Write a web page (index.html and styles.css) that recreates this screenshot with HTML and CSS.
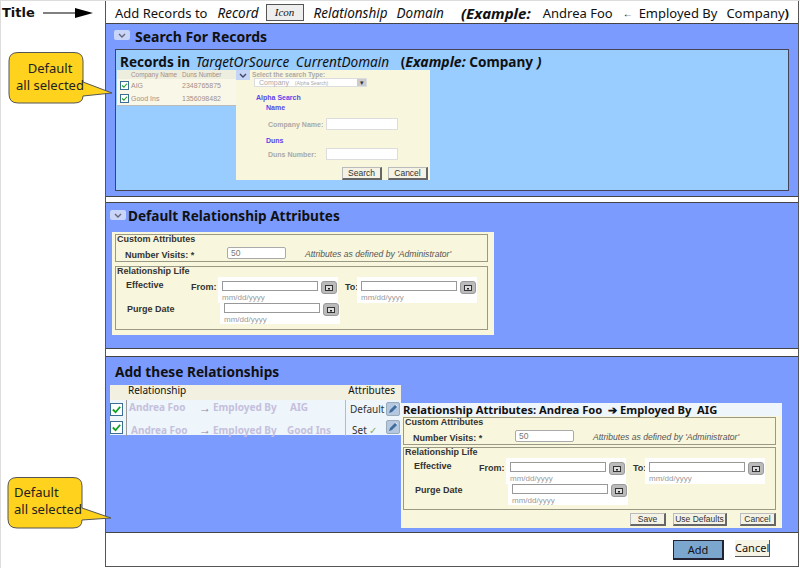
FILE: index.html
```html
<!DOCTYPE html>
<html lang="en">
<head>
  <meta charset="UTF-8" />
  <title>Add Records</title>
  <link rel="stylesheet" href="styles.css">
</head>
<body>
  <div class="page">
    <aside class="gutter">
      <div class="title-note">
        <b>Title</b>
        <svg class="title-arrow" width="50" height="10" viewBox="0 0 50 10"><path d="M0 5H35" stroke="#000" stroke-width="1"/><path d="M32 0L50 5L32 10Z" fill="#000"/></svg>
      </div>
    </aside>

    <main class="main">
      <header class="titlebar">
        <span class="t1">Add Records to</span>
        <i class="t2">Record</i>
        <span class="icon-box">Icon</span>
        <i class="t3">Relationship</i>
        <i class="t4">Domain</i>
        <b class="t5"><i>(Example:</i></b>
        <span class="t6">Andrea Foo</span>
        <b class="t7">←</b>
        <span class="t8">Employed By</span>
        <span class="t9">Company<b>)</b></span>
      </header>

      <section class="sec sec-search">
        <h2 class="sec-head"><span class="toggle"><svg width="8" height="5" viewBox="0 0 8 5"><path d="M1 1L4 4L7 1" fill="none" stroke="#667" stroke-width="1.4"/></svg></span>Search For Records</h2>
        <div class="records">
          <h3 class="records-head">Records in <i class="light first-light">TargetOrSource</i> <i class="light">CurrentDomain</i> <span class="ex">(<i>Example:</i> Company<i> )</i></span></h3>
          <div class="records-body">
            <div class="mini-table">
              <div class="mini-row mini-top"><span></span><span>Company Name</span><span>Duns Number</span></div>
              <div class="mini-row"><span class="chk small"><svg viewBox="0 0 12 12"><path d="M2 6L5 9L10 3" fill="none" stroke="#12a020" stroke-width="2"/></svg></span><span>AIG</span><span>2348765875</span></div>
              <div class="mini-row"><span class="chk small"><svg viewBox="0 0 12 12"><path d="M2 6L5 9L10 3" fill="none" stroke="#12a020" stroke-width="2"/></svg></span><span>Good Ins</span><span>1356098482</span></div>
            </div>
            <form class="search-form">
              <span class="form-toggle"><svg width="8" height="5" viewBox="0 0 8 5"><path d="M1 1L4 4L7 1" fill="none" stroke="#446" stroke-width="1.4"/></svg></span>
              <div class="type-label">Select the search Type:</div>
              <div class="type-select"><span>Company &nbsp; <small>(Alpha Search)</small></span><span class="sel-btn">▾</span></div>
              <div class="blue-head alpha">Alpha Search</div>
              <div class="blue-head sub">Name</div>
              <div class="form-row first"><label>Company Name:</label><span class="text-in"></span></div>
              <div class="blue-head sub duns">Duns</div>
              <div class="form-row"><label>Duns Number:</label><span class="text-in"></span></div>
              <div class="form-btns"><span class="btn">Search</span><span class="btn">Cancel</span></div>
            </form>
          </div>
        </div>
      </section>
      <div class="sep sep-a"></div>

      <section class="sec sec-default">
        <h2 class="sec-head"><span class="toggle"><svg width="8" height="5" viewBox="0 0 8 5"><path d="M1 1L4 4L7 1" fill="none" stroke="#667" stroke-width="1.4"/></svg></span>Default Relationship Attributes</h2>
        <div class="attr-panel">
          <div class="box box-custom">
            <div class="box-title">Custom Attributes</div>
            <div class="visits"><b>Number Visits: *</b><span class="num-in">50</span><i>Attributes as defined by 'Administrator'</i></div>
          </div>
          <div class="box box-life">
            <div class="box-title">Relationship Life</div>
            <div class="life-row">
              <b class="life-name">Effective</b><b class="from">From:</b>
              <div class="date"><span class="date-in"></span><span class="cal"><svg width="8" height="6" viewBox="0 0 8 6"><rect x=".5" y=".5" width="7" height="5" fill="#ddd" stroke="#333"/><rect x="3" y="3" width="2" height="1.5" fill="#222"/></svg></span><small>mm/dd/yyyy</small></div>
              <b class="to">To:</b>
              <div class="date"><span class="date-in"></span><span class="cal"><svg width="8" height="6" viewBox="0 0 8 6"><rect x=".5" y=".5" width="7" height="5" fill="#ddd" stroke="#333"/><rect x="3" y="3" width="2" height="1.5" fill="#222"/></svg></span><small>mm/dd/yyyy</small></div>
            </div>
            <div class="life-row">
              <b class="life-name purge">Purge Date</b>
              <div class="date"><span class="date-in"></span><span class="cal"><svg width="8" height="6" viewBox="0 0 8 6"><rect x=".5" y=".5" width="7" height="5" fill="#ddd" stroke="#333"/><rect x="3" y="3" width="2" height="1.5" fill="#222"/></svg></span><small>mm/dd/yyyy</small></div>
            </div>
          </div>
        </div>
      </section>
      <div class="sep sep-b"></div>

      <section class="sec sec-add">
        <h2 class="sec-head add-head">Add these Relationships</h2>
        <div class="add-body">
          <div class="rel-table">
            <div class="rel-top"><span>Relationship</span><span>Attributes</span></div>
            <div class="rel-row">
              <span class="chk"><svg viewBox="0 0 12 12"><path d="M2 6L5 9L10 3" fill="none" stroke="#12a020" stroke-width="2"/></svg></span>
              <div class="rel-text high"><span class="r-name">Andrea Foo</span><span class="r-arrow">→</span><span class="r-by">Employed By</span><span class="r-co">AIG</span></div>
              <div class="rel-attr"><span>Default</span><span class="pen"><svg width="12" height="12" viewBox="0 0 12 12"><path d="M2 10L3 7L8 2L10 4L5 9Z" fill="#3f6d9e"/><path d="M8.5 1.5L10.5 3.5" stroke="#e8eef6"/></svg></span></div>
            </div>
            <div class="rel-row">
              <span class="chk"><svg viewBox="0 0 12 12"><path d="M2 6L5 9L10 3" fill="none" stroke="#12a020" stroke-width="2"/></svg></span>
              <div class="rel-text low"><span class="r-name">Andrea Foo</span><span class="r-arrow">→</span><span class="r-by">Employed By</span><span class="r-co low-co">Good Ins</span></div>
              <div class="rel-attr"><span class="set">Set <em class="tick">✓</em></span><span class="pen"><svg width="12" height="12" viewBox="0 0 12 12"><path d="M2 10L3 7L8 2L10 4L5 9Z" fill="#3f6d9e"/><path d="M8.5 1.5L10.5 3.5" stroke="#e8eef6"/></svg></span></div>
            </div>
          </div>
          <div class="attr-pop">
            <div class="pop-title">Relationship Attributes: Andrea Foo &nbsp;➔ Employed By &nbsp;AIG</div>
            <div class="attr-panel pop-panel">
              <div class="box box-custom">
                <div class="box-title">Custom Attributes</div>
                <div class="visits"><b>Number Visits: *</b><span class="num-in">50</span><i>Attributes as defined by 'Administrator'</i></div>
              </div>
              <div class="box box-life">
                <div class="box-title">Relationship Life</div>
                <div class="life-row">
                  <b class="life-name">Effective</b><b class="from">From:</b>
                  <div class="date"><span class="date-in"></span><span class="cal"><svg width="8" height="6" viewBox="0 0 8 6"><rect x=".5" y=".5" width="7" height="5" fill="#ddd" stroke="#333"/><rect x="3" y="3" width="2" height="1.5" fill="#222"/></svg></span><small>mm/dd/yyyy</small></div>
                  <b class="to">To:</b>
                  <div class="date"><span class="date-in"></span><span class="cal"><svg width="8" height="6" viewBox="0 0 8 6"><rect x=".5" y=".5" width="7" height="5" fill="#ddd" stroke="#333"/><rect x="3" y="3" width="2" height="1.5" fill="#222"/></svg></span><small>mm/dd/yyyy</small></div>
                </div>
                <div class="life-row">
                  <b class="life-name purge">Purge Date</b>
                  <div class="date"><span class="date-in"></span><span class="cal"><svg width="8" height="6" viewBox="0 0 8 6"><rect x=".5" y=".5" width="7" height="5" fill="#ddd" stroke="#333"/><rect x="3" y="3" width="2" height="1.5" fill="#222"/></svg></span><small>mm/dd/yyyy</small></div>
                </div>
              </div>
              <div class="pop-btns"><span class="btn save">Save</span><span class="btn wide">Use Defaults</span><span class="btn save">Cancel</span></div>
            </div>
          </div>
        </div>
      </section>

      <footer class="footer">
        <span class="add-btn">Add</span>
        <span class="cancel-btn">Cancel</span>
      </footer>
    </main>

    <!-- yellow notes sit over the gutter and the sections -->
    <svg class="note note-top" width="106" height="54" viewBox="0 0 106 54"><path d="M10 .5H66Q75 .5 75 9V30L104 41L75 44Q75 51 66 51H10Q1 51 1 42V9Q1 .5 10 .5Z" fill="#ffd21e" stroke="#555" stroke-width="1"/></svg>
    <div class="note-text note-text-top">Default<br>all selected</div>
    <svg class="note note-bottom" width="106" height="54" viewBox="0 0 106 54"><path d="M10 .5H66Q75 .5 75 9V31L104 41L75 43Q75 51 66 51H10Q1 51 1 42V9Q1 .5 10 .5Z" fill="#ffd21e" stroke="#555" stroke-width="1"/></svg>
    <div class="note-text note-text-bottom">Default<br>all selected</div>
  </div>
</body>
</html>
```

FILE: styles.css
```css
* {
  box-sizing: border-box;
}
html, body {
  margin: 0;
  height: 100%;
  background: #fff;
}
body {
  font-family: "Noto Sans", Tahoma, sans-serif;
  color: #111;
  overflow: hidden;
}
.page {
  position: relative;
  display: flex;
  width: 800px;
  height: 568px;
  border-top: 1px solid #ddd;
  border-left: 1px solid #ddd;
}

/* left column */
.gutter {
  width: 104px;
  flex: none;
}
.title-note {
  display: flex;
  align-items: center;
  gap: 8px;
  padding: 1px 0 0 1px;
  height: 22px;
  font-family: "DejaVu Sans", sans-serif;
}
.title-note b {
  font-size: 13px;
}
.title-arrow {
  flex: none;
}
.note {
  position: absolute;
}
.note-top {
  left: 7px;
  top: 51px;
}
.note-bottom {
  left: 6px;
  top: 476px;
}
.note-text {
  position: absolute;
  font-size: 13px;
  line-height: 17px;
  color: #222;
}
.note-text-top {
  left: 15px;
  top: 59px;
  width: 68px;
  text-align: center;
}
.note-text-bottom {
  left: 13px;
  top: 483px;
}

/* main frame */
.main {
  width: 694px;
  height: 566px;
  flex: none;
  border-left: 1px solid #555;
  border-right: 1px solid #555;
  border-bottom: 1px solid #555;
  display: flex;
  flex-direction: column;
}
.titlebar {
  height: 23px;
  flex: none;
  border-bottom: 1px solid #444;
  display: flex;
  align-items: center;
  font-size: 13px;
  white-space: nowrap;
  padding: 1px 0 0 9px;
}
.titlebar i {
  font-size: 13.5px;
}
.t2 { margin-left: 10px; }
.icon-box {
  flex: none;
  margin: -1px 0 0 7px;
  width: 38px;
  height: 17px;
  border: 1px solid #555;
  background: #eee;
  font: italic 11px "Liberation Serif", serif;
  display: flex;
  align-items: center;
  justify-content: center;
}
.t3 { margin-left: 10px; }
.t4 { margin-left: 9px; }
.t5 { margin-left: 17px; }
.titlebar .t5 i { font-size: 15px; }
.t6 { margin-left: 12px; }
.t7 { margin-left: 10px; font-size: 10px; }
.t8 { margin-left: 6px; }
.t9 { margin-left: 9px; }

.sec {
  flex: none;
  background: #7b9bff;
  border-bottom: 1px solid #444;
}
.sec-search { height: 173px; }
.sec-default { height: 146px; }
.sec-add { height: 176px; }
.sep {
  flex: none;
  border-bottom: 1px solid #444;
}
.sep-a { height: 6px; }
.sep-b { height: 8px; }
.sec-head {
  margin: 0;
  height: 25px;
  display: flex;
  align-items: center;
  gap: 5px;
  padding: 0 0 0 8px;
  font-size: 14px;
  font-weight: 700;
}
.toggle {
  width: 16px;
  height: 10px;
  background: #c8d5f8;
  border-radius: 2px;
  display: flex;
  align-items: center;
  justify-content: center;
  margin-top: -3px;
}
.sec-default .sec-head {
  height: 24px;
  margin-bottom: 5px;
  padding-left: 4px;
  gap: 2px;
  font-size: 13.6px;
}
.sec-default .toggle {
  margin-top: 0;
}
.add-head {
  padding-left: 9px;
  height: 28px;
  font-size: 13.7px;
}

/* search section */
.records {
  margin: 0 0 0 9px;
  width: 674px;
  height: 142px;
  background: #99ccff;
  border: 1px solid #445;
  padding-left: 1px;
}
.records-head {
  margin: 0;
  height: 20px;
  padding: 2px 0 0 3px;
  font-size: 13.6px;
  font-weight: 700;
  white-space: nowrap;
}
.light {
  font-weight: 400;
  margin-right: 3px;
}
.first-light {
  margin-left: 2px;
}
.ex {
  margin-left: 5px;
}
.ex i {
  font-size: 14px;
}
.records-body {
  display: flex;
  align-items: flex-start;
}
.mini-table {
  width: 119px;
  height: 36px;
  background: #f8f7e8;
  border-bottom: 1px solid #bbb;
  font-family: "Liberation Sans", sans-serif;
  font-size: 7px;
  color: #a58f88;
  white-space: nowrap;
}
.mini-row {
  display: grid;
  grid-template-columns: 14px 51px 1fr;
  align-items: center;
  height: 13px;
}
.mini-top {
  height: 9px;
  background: #eeeede;
  font-size: 6.4px;
}
.chk {
  display: block;
  width: 13px;
  height: 13px;
  border: 1px solid #3c6e94;
  background: #fff;
}
.chk svg {
  display: block;
}
.chk.small {
  width: 9px;
  height: 9px;
  margin-left: 3px;
}
.search-form {
  position: relative;
  width: 194px;
  height: 110px;
  background: #f8f6dc;
  padding: 1px 0 0 16px;
  font-family: "Liberation Sans", sans-serif;
  font-size: 7px;
  color: #aaa;
}
.form-toggle {
  position: absolute;
  left: 0;
  top: 0;
  width: 14px;
  height: 10px;
  background: #c5d5f5;
  display: flex;
  align-items: center;
  justify-content: center;
}
.type-label {
  font-weight: 700;
  line-height: 7px;
  font-size: 6.6px;
}
.type-select {
  width: 113px;
  height: 9px;
  margin: 0 0 0 2px;
  background: #fff;
  border: 1px solid #ddd;
  display: flex;
  justify-content: space-between;
  padding-left: 4px;
  line-height: 7px;
}
.type-select small {
  font-size: 5px;
}
.sel-btn {
  width: 9px;
  background: #ccc;
  color: #333;
  text-align: center;
}
.blue-head {
  color: #5a45ee;
  font-weight: 700;
  line-height: 9px;
}
.alpha {
  margin: 6px 0 0 4px;
}
.sub {
  margin: 1px 0 0 14px;
}
.duns {
  margin-top: 6px;
}
.form-row {
  display: flex;
  align-items: center;
  height: 12px;
  margin-top: 3px;
  padding-left: 16px;
  font-weight: 700;
}
.first {
  margin-top: 6px;
}
.form-row label {
  width: 58px;
}
.text-in {
  width: 72px;
  height: 12px;
  background: #fff;
  border: 1px solid #ddd;
}
.form-btns {
  display: flex;
  justify-content: flex-end;
  gap: 6px;
  margin: 7px 2px 0 0;
}
.btn {
  width: 40px;
  height: 13px;
  background: #f4f2e4;
  border: 1px solid #bbb;
  border-right: 2px solid #666;
  border-bottom: 2px solid #666;
  color: #333;
  font-size: 8.5px;
  line-height: 10px;
  text-align: center;
}

/* attribute panels */
.attr-panel {
  margin-left: 6px;
  width: 382px;
  height: 103px;
  padding: 2px 6px 0 3px;
  background: #f8f6dc;
  font-family: "Liberation Sans", sans-serif;
  font-size: 9px;
  color: #333;
}
.box {
  border: 1px solid #999984;
  padding-left: 1px;
}
.box-custom {
  height: 28px;
}
.box-life {
  margin-top: 4px;
  height: 64px;
}
.box-title {
  font-weight: 700;
  line-height: 9px;
}
.visits {
  display: flex;
  align-items: center;
  padding-left: 8px;
  margin-top: 3px;
  height: 12px;
}
.visits b {
  width: 102px;
  padding-top: 3px;
}
.num-in {
  width: 59px;
  height: 12px;
  background: #fff;
  border: 1px solid #aaa;
  border-radius: 2px;
  padding-left: 3px;
  font-size: 8.5px;
  line-height: 10px;
  color: #777;
}
.visits i {
  margin-left: 19px;
  padding-top: 1px;
  font-size: 8.6px;
  color: #555;
}
.life-row {
  display: flex;
  align-items: flex-start;
  height: 26px;
  margin-top: 1px;
}
.life-row + .life-row {
  margin-top: 0;
}
.life-name {
  width: 74px;
  padding: 3px 0 0 9px;
}
.purge {
  width: 103px;
  padding: 1px 0 0 10px;
}
.from {
  width: 27px;
  padding-top: 5px;
}
.to {
  width: 19px;
  padding: 5px 0 0 7px;
}
.date {
  width: 120px;
  height: 26px;
  background: #fff;
  padding: 4px 0 0 4px;
  display: grid;
  grid-template-columns: 96px 1fr;
  column-gap: 3px;
  align-content: start;
}
.date small {
  grid-column: 1 / 3;
  font-size: 8px;
  color: #999;
  line-height: 10px;
  margin-top: -1px;
}
.date-in {
  height: 10px;
  border: 1px solid #999;
  background: #fff;
}
.cal {
  width: 16px;
  height: 13px;
  background: #bbb;
  border-radius: 3px;
  border: 1px solid #999;
  display: flex;
  align-items: center;
  justify-content: center;
}
.life-row + .life-row .date {
  height: 21px;
  padding-top: 0;
}

/* add section */
.add-body {
  display: flex;
  align-items: flex-start;
  padding-left: 4px;
}
.rel-table {
  width: 291px;
  height: 50px;
  background: #eef5fb;
  font-size: 10px;
}
.rel-top {
  height: 15px;
  background: #f2f0e0;
  display: flex;
  justify-content: space-between;
  padding: 0 6px 0 18px;
  line-height: 11px;
}
.rel-row {
  display: grid;
  grid-template-columns: 16px 219px 1fr;
  height: 18px;
  align-items: center;
}
.rel-text {
  display: flex;
  font-weight: 700;
  color: #c5c0dc;
  white-space: nowrap;
  padding-left: 2px;
  border-left: 1px solid #999;
  height: 18px;
  align-items: center;
}
.high {
  padding-bottom: 4px;
}
.low {
  padding-top: 5px;
}
.low .r-name {
  padding-left: 2px;
}
.r-name { width: 70px; }
.r-arrow { width: 14px; font-size: 12px; color: #88a; font-weight: 400; }
.r-by { width: 75px; }
.r-co { margin-left: 2px; }
.low-co { margin-left: -1px; }
.rel-attr {
  display: flex;
  justify-content: space-between;
  padding: 0 1px 0 4px;
  color: #333;
  border-left: 1px solid #bbb;
  height: 18px;
  align-items: center;
}
.set {
  padding-top: 5px;
  padding-left: 2px;
}
.tick {
  color: #7ab07a;
  font-style: normal;
}
.pen {
  width: 14px;
  height: 14px;
  background: #b5c8e0;
  border: 1px solid #9ab;
  border-radius: 2px;
}
.pen svg {
  display: block;
}
.attr-pop {
  margin-top: 18px;
  width: 381px;
}
.pop-title {
  height: 13px;
  background: #eef5fb;
  font-size: 11.2px;
  font-weight: 700;
  line-height: 13px;
  padding-left: 2px;
  white-space: nowrap;
}
.pop-panel {
  margin: 0;
  width: 381px;
  height: 112px;
  padding: 1px 6px 0 2px;
}
.pop-panel .box-life {
  margin-top: 2px;
  height: 63px;
}
.pop-btns {
  display: flex;
  justify-content: flex-end;
  gap: 7px;
  margin-top: 3px;
}
.pop-btns .save {
  width: 36px;
}
.pop-btns .wide {
  width: 54px;
  margin-right: 6px;
}

/* bottom buttons */
.footer {
  flex: 1;
  display: flex;
  align-items: flex-start;
  padding: 7px 0 0 567px;
  font-size: 11px;
}
.add-btn {
  width: 51px;
  height: 20px;
  background: #7ba7cf;
  border: 1px solid #223;
  border-right-width: 2px;
  border-bottom-width: 2px;
  text-align: center;
  line-height: 18px;
}
.cancel-btn {
  margin-left: 11px;
  width: 35px;
  height: 17px;
  background: #f6f4e4;
  border-right: 1px solid #555;
  border-bottom: 1px solid #555;
  text-align: center;
  line-height: 16px;
}
```
